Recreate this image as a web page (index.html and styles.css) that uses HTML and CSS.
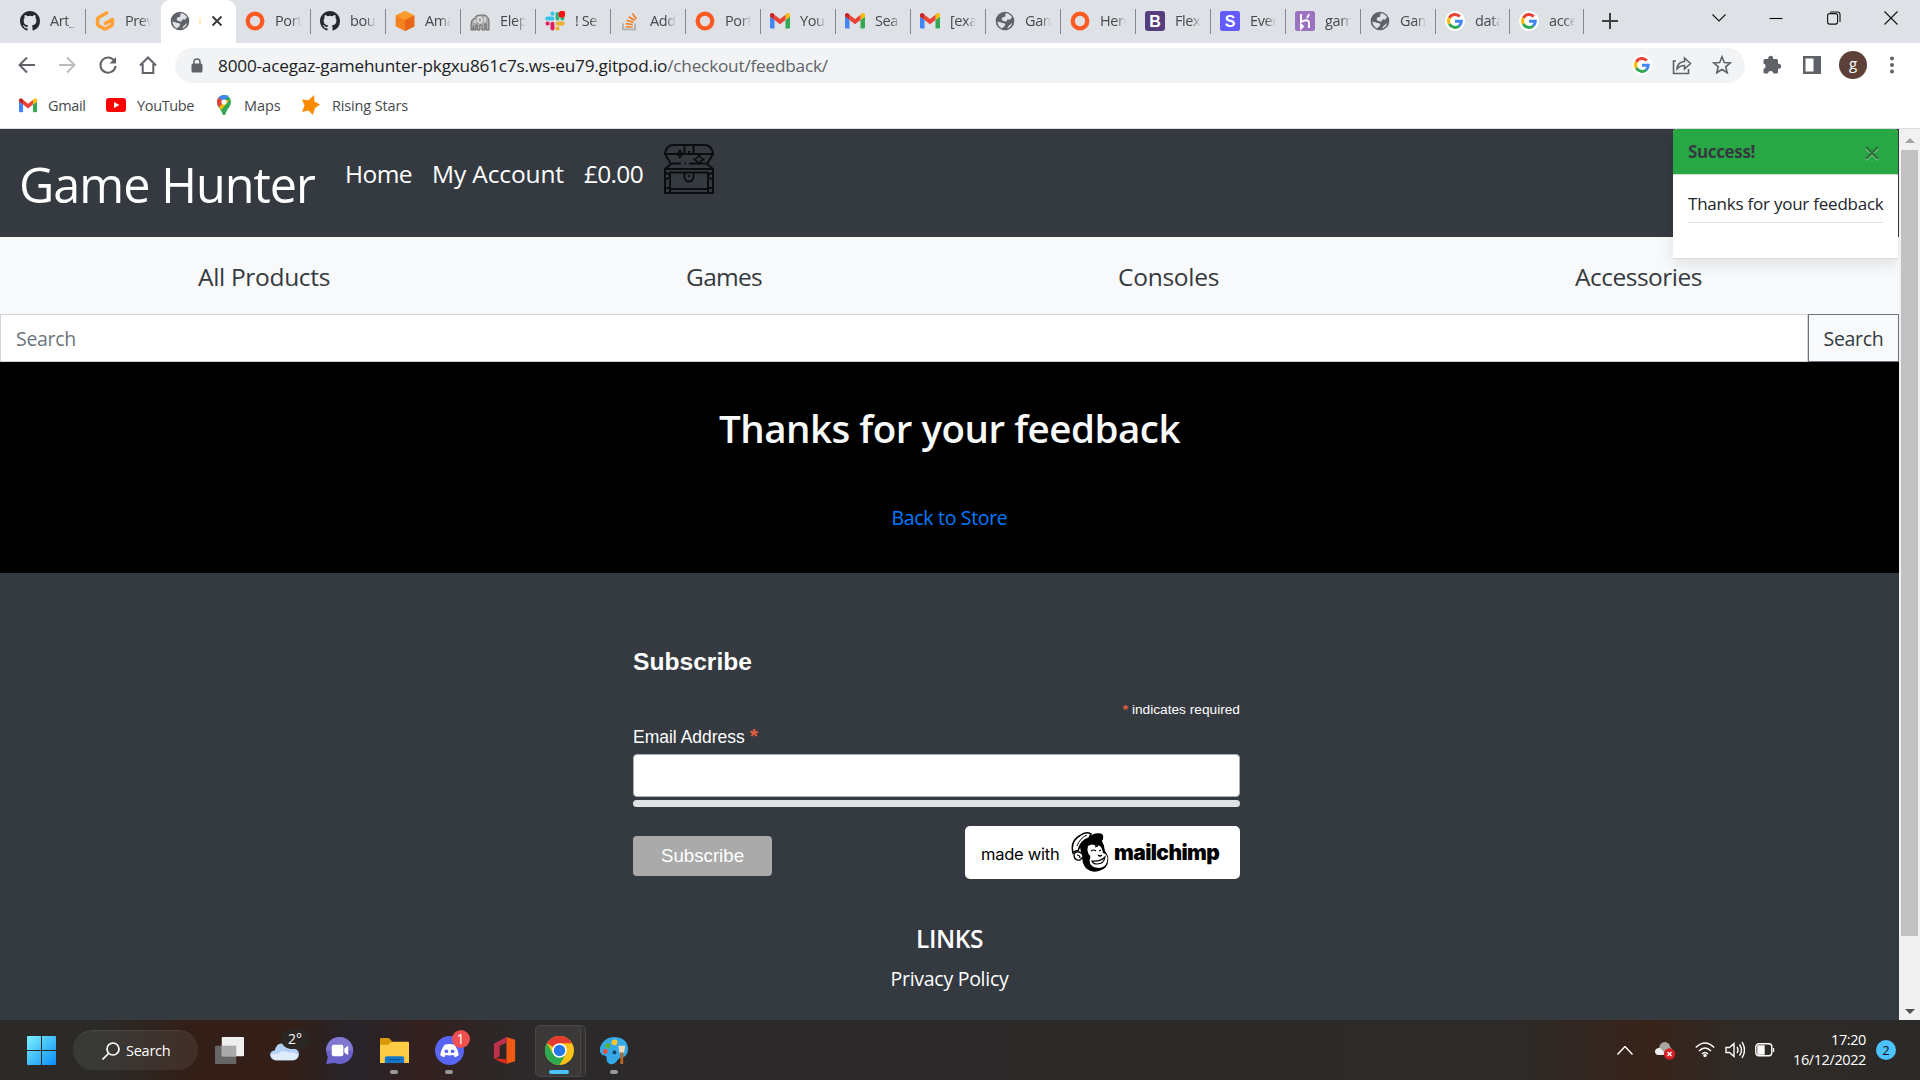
FILE: index.html
```html
<!DOCTYPE html>
<html lang="en">
<head>
<meta charset="utf-8">
<title>Game Hunter</title>
<link rel="stylesheet" href="styles.css">
</head>
<body>
<svg class="defs" aria-hidden="true">
  <symbol id="github" viewBox="0 0 16 16"><path fill="#24292f" d="M8 0C3.58 0 0 3.58 0 8c0 3.54 2.29 6.53 5.47 7.59.4.07.55-.17.55-.38 0-.19-.01-.82-.01-1.49-2.01.37-2.53-.49-2.69-.94-.09-.23-.48-.94-.82-1.13-.28-.15-.68-.52-.01-.53.63-.01 1.08.58 1.23.82.72 1.21 1.87.87 2.33.66.07-.52.28-.87.51-1.07-1.78-.2-3.64-.89-3.64-3.95 0-.87.31-1.59.82-2.15-.08-.2-.36-1.02.08-2.12 0 0 .67-.21 2.2.82a7.6 7.6 0 0 1 4 0c1.53-1.04 2.2-.82 2.2-.82.44 1.1.16 1.92.08 2.12.51.56.82 1.27.82 2.15 0 3.07-1.87 3.75-3.65 3.95.29.25.54.73.54 1.48 0 1.07-.01 1.93-.01 2.2 0 .21.15.46.55.38A8 8 0 0 0 16 8c0-4.42-3.58-8-8-8z"/></symbol>
  <symbol id="gitpod" viewBox="0 0 20 20"><path d="M11.5 2 4 6.2Q2.600 7 2.600 8.500v4.500Q2.600 14.300 4 15l5 2.700q1 .5 2 0l5-2.800q1.400-.8 1.400-2.300V8.500L10.500 12.300" fill="none" stroke="#ffa235" stroke-width="3.600" stroke-linecap="round" stroke-linejoin="round"/></symbol>
  <symbol id="globe" viewBox="0 0 20 20"><circle cx="10" cy="10" r="9.300" fill="#5f6368"/><path d="M10.500 2.200c3 .1 5.400 1.600 6.600 4l-2.200 2.600-2.300-.6-1 2.400-3-.4-2.200-1.800 1.200-2.200 2.600-.4zM2.500 10.500l4.500 1.200 3.300 1.100-.5 2.300-2.300 1.700-.5.6C4.400 16.300 2.500 13.600 2.500 10.500zM12 17.600l1.500-2.600 3.600-3c-.5 2.800-2.500 5-5.100 5.600z" fill="#dee1e6"/></symbol>
  <symbol id="ring" viewBox="0 0 20 20"><circle cx="10" cy="10" r="7.300" fill="none" stroke="#ff5a24" stroke-width="4.300"/></symbol>
  <symbol id="aws" viewBox="0 0 20 20"><path d="M10 0 19.300 4.500v11L10 20 .7 15.500v-11z" fill="#f58220"/><path d="M10 0 19.300 4.500 10 9 .7 4.500z" fill="#fb9b2e"/><path d="M10 9 19.300 4.500v11L10 20z" fill="#e8661b"/></symbol>
  <symbol id="elephant" viewBox="0 0 20 20"><path d="M1 19V13Q1 8 5 7 6 3.500 10 4h4q5 1 5 7v8h-3v-6h-1v6h-3v-5h-2v5H7v-5H6v5H3.500v-4L3 19z" fill="#aaa" stroke="#666" stroke-width="1"/><path d="M8 7q3-2 4 1t-2 4q-3-1-2-5M15 6v5M5 9v3" fill="none" stroke="#eee" stroke-width="1.200"/></symbol>
  <symbol id="slack" viewBox="0 0 20 20"><g stroke-width="4" stroke-linecap="round"><path d="M7.500 2.500v.2M2.300 7.500h5" stroke="#36c5f0"/><path d="M12.500 3v4.500M17.500 7.500h-.2" stroke="#2eb67d"/><path d="M12.700 12.500h5M12.500 17.500v-.2" stroke="#ecb22e"/><path d="M7.500 12.700v4.800M2.500 12.500h.2" stroke="#e01e5a"/></g><circle cx="17" cy="3.200" r="3.500" fill="#f11"/></symbol>
  <symbol id="stack" viewBox="0 0 20 20"><path d="M3 12.500v6h12v-6" fill="none" stroke="#aaadb0" stroke-width="1.700"/><path d="M5.500 16h7.200M5.700 12.700l7.100.8M6.700 9.300l6.700 2M8.700 5.800l5.900 3.700M12.500 2.500l3.800 5.700" stroke="#f48024" stroke-width="1.700"/></symbol>
  <symbol id="gmail" viewBox="0 0 20 16"><path d="M1 15.500h3.500V7L0 3.500v11q0 1 1 1z" fill="#4285f4"/><path d="M15.500 15.500H19q1 0 1-1v-11L15.500 7z" fill="#34a853"/><path d="M15.500 1.800V7L20 3.500V2c0-2-2.200-2.700-3.500-1.500z" fill="#fbbc04"/><path d="M4.500 7V1.700L10 6l5.500-4.200V7L10 11.300z" fill="#ea4335"/><path d="M0 2v1.500L4.500 7V1.700L3.500.5C2.200-.700 0 .2 0 2z" fill="#c5221f"/></symbol>
  <symbol id="heroku" viewBox="0 0 20 20"><rect width="20" height="20" rx="2.500" fill="#9a72c0"/><path d="M6 3v8q4-2.300 6.500-1.500 1.500.5 1.500 2.500v5M13.800 3q0 2-2 4M6 13.500v4l2-2z" fill="none" stroke="#fff" stroke-width="1.900"/></symbol>
  <symbol id="google" viewBox="0 0 20 20"><circle cx="10" cy="10" r="10" fill="#fff"/><g fill="none" stroke-width="3"><path d="M14.800 5.600A6.500 6.500 0 0 0 4.300 7" stroke="#ea4335"/><path d="M4.300 7a6.500 6.500 0 0 0 0 6" stroke="#fbbc05"/><path d="M4.300 13a6.500 6.500 0 0 0 10 1.800" stroke="#34a853"/><path d="M14.300 14.800a6.500 6.500 0 0 0 2-4.500H10" stroke="#4285f4"/></g></symbol>
</svg>

<header class="tabs">
  <div class="tab"><svg><use href="#github"/></svg><span>Art_</span></div>
  <div class="tab no-line"><svg><use href="#gitpod"/></svg><span>Prev</span></div>
  <div class="tab active"><svg><use href="#globe"/></svg><i class="hint"></i><svg class="x" viewBox="0 0 12 12"><path d="m1.500 1.500 9 9m0-9-9 9"/></svg></div>
  <div class="tab"><svg><use href="#ring"/></svg><span>Port</span></div>
  <div class="tab"><svg><use href="#github"/></svg><span>bou</span></div>
  <div class="tab"><svg><use href="#aws"/></svg><span>Ama</span></div>
  <div class="tab"><svg><use href="#elephant"/></svg><span>Elep</span></div>
  <div class="tab"><svg><use href="#slack"/></svg><span>! Se</span></div>
  <div class="tab"><svg><use href="#stack"/></svg><span>Add</span></div>
  <div class="tab"><svg><use href="#ring"/></svg><span>Port</span></div>
  <div class="tab"><svg><use href="#gmail"/></svg><span>You</span></div>
  <div class="tab"><svg><use href="#gmail"/></svg><span>Sea</span></div>
  <div class="tab"><svg><use href="#gmail"/></svg><span>[exa</span></div>
  <div class="tab"><svg><use href="#globe"/></svg><span>Gam</span></div>
  <div class="tab"><svg><use href="#ring"/></svg><span>Hero</span></div>
  <div class="tab"><svg viewBox="0 0 20 20"><rect width="20" height="20" rx="3" fill="#563d7c"/><text x="10" y="15.500" text-anchor="middle" class="glyph">B</text></svg><span>Flex</span></div>
  <div class="tab"><svg viewBox="0 0 20 20"><rect width="20" height="20" rx="2.500" fill="#635bff"/><text x="10" y="15.500" text-anchor="middle" class="glyph">S</text></svg><span>Ever</span></div>
  <div class="tab"><svg><use href="#heroku"/></svg><span>gam</span></div>
  <div class="tab"><svg><use href="#globe"/></svg><span>Gam</span></div>
  <div class="tab narrow"><svg><use href="#google"/></svg><span>data</span></div>
  <div class="tab narrow"><svg><use href="#google"/></svg><span>acce</span></div>
  <svg class="plus" viewBox="0 0 16 16"><path d="M8 0v16M0 8h16"/></svg>
  <div class="window">
    <svg viewBox="0 0 14 14"><path d="m.5 3.500 6.500 6.500 6.500-6.500"/></svg>
    <svg viewBox="0 0 14 14"><path d="M.5 7.500h13"/></svg>
    <svg viewBox="0 0 14 14"><rect x=".6" y="2.600" width="10" height="10.500" rx="2"/><path d="M3 1h7.500q2.500 0 2.500 2.500V11"/></svg>
    <svg viewBox="0 0 14 14"><path d="m.5.5 13 13m0-13-13 13"/></svg>
  </div>
</header>

<div class="toolbar">
  <div class="nav-icons">
    <svg viewBox="0 0 20 20"><path d="M18 10H3m7-7.500L2.500 10l7.500 7.500"/></svg>
    <svg class="off" viewBox="0 0 20 20"><path d="M2 10h15m-7-7.500 7.500 7.500-7.500 7.500"/></svg>
    <svg viewBox="0 0 20 20"><path d="M16.500 6A7.600 7.600 0 1 0 17.600 11"/><path d="M18 2v6.500h-6.500z" fill="#5f6368" stroke="none"/></svg>
    <svg viewBox="0 0 20 20"><path d="M2 10.500 10 2.500l8 8M4.700 9v9h10.600V9"/></svg>
  </div>
  <div class="omnibox">
    <svg class="lock" viewBox="0 0 12 15"><rect x=".5" y="5.500" width="11" height="9" rx="1.500" fill="#5f6368"/><path d="M3 6V4a3 3 0 0 1 6 0v2" fill="none" stroke="#5f6368" stroke-width="1.500"/></svg>
    <span class="url">8000-acegaz-gamehunter-pkgxu861c7s.ws-eu79.gitpod.io<span class="path">/checkout/feedback/</span></span>
    <svg class="oi" viewBox="0 0 20 20"><use href="#google"/></svg>
    <svg class="oi line" viewBox="0 0 20 20"><path d="M4 6H1.500v12.500h15V14M5 14q.5-7 7.500-7.500V3l6 5.500-6 5.500v-3.500Q8 10.500 5 14z"/></svg>
    <svg class="oi line" viewBox="0 0 20 20"><path d="m10 1.800 2.300 5.700 6.100.4-4.700 3.900 1.500 6L10 14.500l-5.200 3.300 1.500-6L1.600 7.900l6.100-.4z"/></svg>
  </div>
  <div class="ext">
    <svg viewBox="0 0 20 20"><path fill="#5f6368" d="M1.500 5.500q0-1.500 1.500-1.500h3.300a2.500 2.500 0 1 1 4.800 0H14.500q1.500 0 1.500 1.500v3.300a2.500 2.500 0 1 1 0 4.800V17q0 1.500-1.500 1.500h-3.200a2.600 2.600 0 0 0-5.200 0H3q-1.500 0-1.500-1.500v-3.300a2.600 2.600 0 0 0 0-5.100z"/></svg>
    <svg viewBox="0 0 20 20"><path fill="#5f6368" fill-rule="evenodd" d="M1 1h18v18H1zM3.500 3.500v13h8v-13z"/></svg>
    <b class="avatar">g</b>
    <svg viewBox="0 0 20 20"><g fill="#5f6368"><circle cx="10" cy="3.500" r="2"/><circle cx="10" cy="10" r="2"/><circle cx="10" cy="16.500" r="2"/></g></svg>
  </div>
</div>

<div class="bookmarks">
  <a class="bm1"><svg viewBox="0 0 20 16"><use href="#gmail"/></svg><span>Gmail</span></a>
  <a class="bm2"><svg viewBox="0 0 20 16"><rect y="1" width="20" height="14" rx="3" fill="#f00"/><path d="m8 5 5.500 3L8 11z" fill="#fff"/></svg><span>YouTube</span></a>
  <a class="bm3"><svg viewBox="0 0 14 20"><path d="M7 0a7 7 0 0 1 7 7c0 4-4 7-5.500 12-.4 1.300-2.600 1.300-3 0C4.500 15 0 11.500 0 7a7 7 0 0 1 7-7z" fill="#34a853"/><path d="M0 7c0 2 .8 3.500 2 5.200L11.800.700 7 0a7 7 0 0 0-7 7z" fill="#4285f4"/><path d="M0 7q.2 2.600 2 5.200L7 7 1.700 2.500Q0 4.500 0 7z" fill="#ea4335"/><path d="m2 12.200 2 2.800 8-9.500L9 5z" fill="#fbbc04"/><circle cx="7" cy="7" r="2.600" fill="#fff"/></svg><span>Maps</span></a>
  <a class="bm4"><svg viewBox="0 0 18 20"><path d="m12 0 .5 6.500 5.500 3-5.200 3.700L11 20l-4.500-4.500L0 17l2.500-6.500L0 4.500l6.500.8z" fill="#fb8c00"/></svg><span>Rising Stars</span></a>
</div>

<div class="viewport">
  <main class="page">
    <nav class="navbar">
      <a class="brand">Game Hunter</a>
      <a class="nl home">Home</a>
      <a class="nl account">My Account</a>
      <a class="nl total">£0.00</a>
      <svg class="chest" viewBox="0 0 50 50"><path d="M1 10Q2 1 10 1h30q8 0 9 9zM1 10l6 10-6 5h48l-6-5 6-10M8 19.500h9M20.500 19.500h1.500M25 19.500h18M20.500 1v9M29.500 1v9M25 7v3M1 25h48v24H1zM6 28.500h38V45H6zM1 36l5-3M49 36l-5-3M1 44h5v5M49 44h-5v5M1 28l5 3M49 28l-5 3M20.500 28.500V33a4.500 4.500 0 0 0 9 0v-4.500M25 31v2"/><path class="spark" d="M16 5.500Q16.500 9.500 20.500 10 16.500 10.500 16 14.500 15.500 10.500 11.500 10 15.500 9.500 16 5.500zM35 10Q35.600 14.500 40.500 15.500 35.600 16.500 35 21 34.400 16.500 29.500 15.500 34.400 14.500 35 10z"/></svg>
      <aside class="toast">
        <div class="toast-head"><strong>Success!</strong><svg viewBox="0 0 16 16"><path class="halo" d="m2 3 12 12M14 3 2 15"/><path d="m2 2 12 12M14 2 2 14"/></svg></div>
        <div class="toast-body"><p>Thanks for your feedback</p></div>
      </aside>
    </nav>
    <nav class="cats"><a class="all">All Products</a><a class="games">Games</a><a class="consoles">Consoles</a><a class="accessories">Accessories</a></nav>
    <form class="search"><div class="field">Search</div><div class="go">Search</div></form>
    <section class="thanks">
      <h1>Thanks for your feedback</h1>
      <a>Back to Store</a>
    </section>
    <footer>
      <div class="signup">
        <h2>Subscribe</h2>
        <p class="req"><em>*</em> indicates required</p>
        <label>Email Address <em>*</em></label>
        <div class="email"></div>
        <div class="bar"></div>
        <div class="row">
          <div class="btn">Subscribe</div>
          <div class="chimp">
            <span class="made">made with</span>
            <svg viewBox="0 0 38 41"><path d="M9 15Q12 6 20 4l10 3q3 5 4 12l3 5q2 12-9 15-12 3-16-8z" fill="#000"/><path d="M2 21Q-1 9 9 3.500 15-1 20 2l-2 4Q10 8 7 19q-3-1-5 2z" fill="#fff" stroke="#000" stroke-width="1.500"/><path d="M6 14Q9 6 16 3" fill="none" stroke="#000"/><path d="M18 5Q23 0 30 1.500q3 1 2 6-1 2-4 2-5-2-11 1z" fill="#000"/><path d="M17 14q4-3 8 0 4-2 6 3l1 4q4 1 4.500 5 0 9-8 10-10 0-10-8 2-4-1-6-2-4-.5-8z" fill="#fff"/><path d="M8 20q-5-1-5 4 1 5 6 4l3-3q0-4-4-5z" fill="#fff" stroke="#000" stroke-width="1.300"/><path d="M6 23q3 0 3 3M20 19q3-2 5 0M28 19l2-1M27 23q2 2 4 0M21 29q8 1 13-4-1 7-8 7-4 0-5-3zM24 15l3-1" fill="none" stroke="#000" stroke-width="1.200"/></svg>
            <b>mailchimp</b>
          </div>
        </div>
      </div>
      <h3>LINKS</h3>
      <a class="privacy">Privacy Policy</a>
    </footer>
  </main>
  <div class="scroll"><i class="up"></i><i class="thumb"></i><i class="down"></i></div>
</div>

<div class="taskbar">
  <svg class="start" viewBox="0 0 29 29"><defs><linearGradient id="w" x2="1" y2="1"><stop stop-color="#7df1ff"/><stop offset="1" stop-color="#0a8cf5"/></linearGradient></defs><path fill="url(#w)" d="M1 0h13v14H0V1q0-1 1-1zM15 0h13q1 0 1 1v13H15zM0 15h14v14H1q-1 0-1-1zM15 15h14v13q0 1-1 1H15z"/></svg>
  <div class="tsearch"><svg viewBox="0 0 18 18"><circle cx="11" cy="7" r="6"/><path d="m6.500 11.500-6 6"/></svg><span>Search</span></div>
  <div class="app"><svg viewBox="0 0 30 30"><rect y="10" width="22" height="19" rx="1" fill="#666"/><rect x="7" y="1" width="23" height="20" rx="1" fill="#efefef"/><path d="M7 10h15v11H7z" fill="#aaa"/></svg></div>
  <div class="app"><svg viewBox="0 0 30 30"><path d="M5 25q-5-1-5-6 1-4 5-4Q7 6 14 8q5 1 6 5 10-1 10 6 0 5-5 6z" fill="#b3d0f6"/><path d="M1 20q3-3 7-1 4-6 11-2 7-1 10 3-1 5-5 5H6q-4 0-5-5z" fill="#dfeafb"/></svg><b class="temp">2°</b></div>
  <div class="app"><svg viewBox="0 0 30 30"><path d="M15 1a14 14 0 1 1-5 27L1 29l2-7A14 14 0 0 1 15 1z" fill="#6a62c8"/><path d="M15 1A14 14 0 0 1 29 15H1A14 14 0 0 1 15 1z" fill="#8177cf"/><rect x="7" y="9" width="12" height="12" rx="2" fill="#fff"/><path d="m20 13 4-3v10l-4-3z" fill="#fff"/></svg></div>
  <div class="app run"><svg viewBox="0 0 30 30"><path d="M0 3q0-1 1-1h8l3 3v5H0z" fill="#d99a09"/><path d="M0 9h9l3-3h17q1 0 1 1v21H0z" fill="#fdcb45"/><path d="M5 28v-5q0-2 2-2h16q2 0 2 2v5z" fill="#1478c8"/><path d="M9 24.500h12" stroke="#0a4a85"/></svg></div>
  <div class="app run"><svg viewBox="0 0 30 30"><circle cx="15" cy="15" r="15" fill="#5865f2"/><path d="M10 9q5-1.500 10 0 4 5 4.500 11-2 1.500-4 2l-1.500-2.300q-4 1-8 0L9.500 22q-2-.5-4-2Q6 14 10 9z" fill="#fff"/><circle cx="11.800" cy="15.800" r="1.900" fill="#5865f2"/><circle cx="18.200" cy="15.800" r="1.900" fill="#5865f2"/></svg><b class="count">1</b></div>
  <div class="app"><svg viewBox="0 0 30 30"><path d="m17 1 9 3v22l-9 3z" fill="#f05a14"/><path d="M17 1v6l-7 3v11l-6 3V8z" fill="#c0304a"/><path d="m5 23 12 1v5l-8-3z" fill="#d8281c"/></svg></div>
  <div class="app run current"><svg viewBox="0 0 30 30"><circle cx="15" cy="15" r="15" fill="#fbc116"/><path d="M15 15 2 7.500A15 15 0 0 1 28 7.500H15z" fill="#e33b2e"/><path d="M2 7.500A15 15 0 0 0 15 30l6.500-11.200L15 15 8.500 18.700z" fill="#2da94f"/><circle cx="15" cy="15" r="7.500" fill="#fff"/><circle cx="15" cy="15" r="5.900" fill="#2478e8"/></svg></div>
  <div class="app run"><svg viewBox="0 0 30 30"><path d="M14 1q14 0 15 12 0 7-5 9-4 0-6 3-3 5-8 4-4-2-3-6 0-3-4-3-4-2-3-8Q3 2 14 1z" fill="#35a9e8"/><circle cx="15" cy="6.500" r="3" fill="#ffc72c"/><circle cx="8" cy="10" r="2.700" fill="#5ab23a"/><circle cx="5.500" cy="16" r="2.500" fill="#f04e2e"/><circle cx="15" cy="17" r="2" fill="#1a3e68"/><path d="M22.500 16v13" stroke="#b8641e" stroke-width="3"/><path d="M19 10h7l-1 7h-5z" fill="#f2dcb8"/></svg></div>
  <div class="tray">
    <svg class="chev" viewBox="0 0 16 9"><path d="m.5 8.500 7.500-8 7.500 8"/></svg>
    <svg class="cloud" viewBox="0 0 20 18"><path d="M3 13q-3-1-3-4 1-3 4-3Q5 0 10 0q5 1 5 5l2 2v6z" fill="#a9a6a2"/><path d="M3 13q-3-1-3-4 1-3 5-3l7 7z" fill="#eee"/><circle cx="14.500" cy="12" r="5.700" fill="#d61f28"/><path d="m12.500 10 4 4m0-4-4 4" stroke="#fff" stroke-width="1.400"/></svg>
    <svg class="wifi" viewBox="0 0 20 16"><path d="M.8 5.500q9.200-9 18.400 0M4 9q6-6 12 0M7 12q3-3 6 0"/><circle cx="10" cy="13.500" r="1.700" fill="#fff" stroke="none"/></svg>
    <svg class="sound" viewBox="0 0 20 18"><path d="M1 6.500v5h3.500L9 15.500v-13L4.500 6.500zM12 6q2 3 0 6M14.500 3.500q4 5.500 0 11M17 1q5 8 0 16"/></svg>
    <svg class="batt" viewBox="0 0 20 14"><rect x=".8" y=".8" width="16" height="12" rx="3"/><path d="M3 3h6v8H3z" fill="#fff"/><path d="M18.500 5v4"/></svg>
    <div class="clock"><span>17:20</span><span>16/12/2022</span></div>
    <b class="notes">2</b>
  </div>
</div>
</body>
</html>
```
FILE: styles.css
```css
* { box-sizing: border-box; }
body { margin: 0; width: 1920px; height: 1080px; overflow: hidden; display: flex; flex-direction: column; background: #fff; font-family: "Open Sans", "Noto Sans", sans-serif; color: #343a40; }
svg { display: block; flex: none; }
p, h1, h2, h3 { margin: 0; font-weight: 400; }
em { font-style: normal; font-weight: 700; color: #e85c41; }
.defs { position: absolute; width: 0; height: 0; }
.glyph { font: 700 16px "Liberation Sans", sans-serif; fill: #fff; }

.tabs { height: 43px; flex: none; background: #dee1e6; display: flex; align-items: flex-start; padding-left: 11px; }
.tab { width: 75px; height: 43px; flex: none; display: flex; align-items: center; gap: 10px; padding: 0 0 1px 9px; background: linear-gradient(#84878c, #84878c) right 0 top 9px / 1.500px 25px no-repeat; }
.tab.narrow { width: 74px; }
.tab svg { width: 20px; height: 20px; }
.tab span { width: 26px; overflow: hidden; white-space: nowrap; font-size: 14.500px; line-height: 24px; letter-spacing: -0.400px; color: #45494d; -webkit-mask-image: linear-gradient(90deg, #000 60%, transparent); mask-image: linear-gradient(90deg, #000 60%, transparent); }
.tab.no-line { background: none; }
.tab.active { background: #fff; border-radius: 9px 9px 0 0; }
.tab.active .x { width: 12px; height: 12px; stroke: #33363a; stroke-width: 1.800; margin-left: 1px; }
.hint { width: 2px; height: 7px; background: #ffefc0; margin: 0 -1px; }
.plus { width: 16px; height: 16px; margin: 13px 0 0 18px; stroke: #3c4043; stroke-width: 2; }
.window { display: flex; gap: 43.500px; margin: 11px 22px 0 auto; }
.window svg { width: 14px; height: 14px; fill: none; stroke: #111; stroke-width: 1.100; }

.toolbar { height: 44px; flex: none; display: flex; align-items: center; padding-left: 17px; }
.nav-icons { display: flex; gap: 20.300px; width: 158px; flex: none; }
.nav-icons svg { width: 20px; height: 20px; fill: none; stroke: #5f6368; stroke-width: 2; }
.nav-icons .off { stroke: #babcbe; }
.omnibox { width: 1570px; flex: none; height: 35px; border-radius: 18px; background: #f1f3f4; display: flex; align-items: center; padding: 0 13px 0 16px; }
.lock { width: 12px; height: 15px; }
.url { margin: 0 auto 0 15px; font-size: 17.200px; letter-spacing: -0.200px; color: #202124; white-space: nowrap; }
.path { color: #5f6368; }
.oi { width: 20px; height: 20px; margin-left: 20px; }
.line { fill: none; stroke: #5f6368; stroke-width: 1.600; }
.ext { display: flex; align-items: center; margin-left: 17px; }
.ext svg { width: 20px; height: 20px; margin-right: 20px; }
.ext svg:last-child { margin-right: 0; }
.avatar { width: 28px; height: 28px; border-radius: 50%; background: #5d4037; color: #fff; font: 15px/25px "Open Sans", sans-serif; text-align: center; margin: 0 15px 0 -3px; }

.bookmarks { height: 42px; flex: none; border-bottom: 1px solid #dadce0; display: flex; padding: 5px 0 0 19px; color: #45494d; }
.bookmarks a { display: flex; align-items: center; height: 26px; font-size: 14.500px; white-space: nowrap; }
.bookmarks .bm1 { width: 87px; gap: 11px; letter-spacing: -0.370px; }
.bookmarks .bm2 { width: 111px; gap: 11px; letter-spacing: -0.350px; }
.bookmarks .bm3 { width: 85px; gap: 13px; letter-spacing: -0.100px; }
.bookmarks .bm4 { gap: 12px; letter-spacing: -0.140px; }
.bm1 svg { width: 18px; height: 15px; }
.bm2 svg { width: 20px; height: 16px; }
.bm3 svg { width: 14px; height: 20px; }
.bm4 svg { width: 18px; height: 20px; }

.viewport { height: 891px; flex: none; display: flex; }
.page { width: 1899px; height: 891px; overflow: hidden; display: flex; flex-direction: column; position: relative; }
.navbar { height: 108px; flex: none; background: #343a40; display: flex; color: #fff; white-space: nowrap; padding-left: 19px; }
.brand { width: 326px; font-size: 48.500px; letter-spacing: -0.960px; line-height: 70px; padding-top: 20px; }
.nl { font-size: 24.500px; line-height: 36px; padding-top: 27px; }
.home { width: 87px; letter-spacing: -0.560px; }
.account { width: 152px; letter-spacing: -0.120px; }
.total { width: 80px; letter-spacing: -0.700px; }
.chest { width: 50px; height: 50px; margin-top: 15px; fill: none; stroke: #0b0d0e; stroke-width: 2; }
.chest .spark { stroke-width: 1.600; }
.cats { height: 77px; flex: none; background: #f8f9fa; display: flex; justify-content: space-between; align-items: center; padding: 2px 197px 0 198px; font-size: 24.500px; }
.all { letter-spacing: -0.320px; }
.games { letter-spacing: -0.710px; }
.consoles { letter-spacing: -0.280px; }
.accessories { letter-spacing: -0.500px; }
.search { height: 48px; flex: none; display: flex; font-size: 19.500px; line-height: 48px; letter-spacing: -0.290px; }
.field { flex: 1; border: 1px solid #ced4da; padding-left: 15px; color: #6c757d; }
.go { width: 91px; border: 1px solid #6c757d; background: #f8f9fa; text-align: center; }
.thanks { height: 211px; flex: none; background: #000; display: flex; flex-direction: column; align-items: center; padding-top: 36px; gap: 45px; }
.thanks h1 { font-size: 38.500px; font-weight: 600; line-height: 60px; letter-spacing: -0.490px; color: #f8f9fa; }
.thanks a { font-size: 19.500px; line-height: 30px; letter-spacing: -0.320px; color: #007bff; }

.toast { position: absolute; right: 1px; top: 0; width: 225px; height: 130px; border-radius: 4px 4px 0 0; background: #fff; border-bottom: 1px solid #dcdde0; box-shadow: 0 5px 15px rgba(0,0,0,.1); color: #212529; font-size: 17px; }
.toast-head { height: 46px; border-radius: 4px 4px 0 0; background: #28a745; border-bottom: 1px solid #d5d9d6; display: flex; align-items: center; justify-content: space-between; padding: 0 18px 0 15px; color: #343a40; letter-spacing: -0.350px; }
.toast-head svg { width: 16px; height: 16px; margin-top: 3px; stroke: #2c6e3c; stroke-width: 2.300; }
.toast-head .halo { stroke: #a5d6b0; stroke-width: 2; }
.toast-body { padding: 14px 15px 0; }
.toast-body p { height: 34px; line-height: 29px; letter-spacing: -0.230px; border-bottom: 1px solid #dee2e6; }

footer { flex: 1; background: #343a40; color: #fff; display: flex; flex-direction: column; align-items: center; }
.signup { width: 607px; margin: 74px 26px 0 0; font-family: "Liberation Sans", Arial, sans-serif; }
h2 { font-size: 24.600px; font-weight: 700; line-height: 30px; }
.req { margin-top: 23px; font-size: 13.700px; line-height: 20px; text-align: right; }
label { display: block; margin-top: 5px; height: 24px; font-size: 17.500px; line-height: 24px; }
label em { font-size: 21px; line-height: 20px; }
.email { height: 43px; margin-top: 5px; background: #fff; border: 1px solid #abb0b2; border-radius: 4px; }
.bar { height: 7px; margin-top: 3px; border-radius: 4px; background: #e0e1e3; }
.row { display: flex; justify-content: space-between; align-items: flex-start; margin-top: 19px; }
.btn { width: 139px; height: 40px; margin-top: 10px; background: #aaa; border-radius: 4px; text-align: center; font-size: 18.700px; line-height: 39px; }
.chimp { width: 275px; height: 53px; border-radius: 5px; background: #fff; color: #000; display: flex; align-items: center; padding-left: 16px; font: 16.500px "Inter", sans-serif; white-space: nowrap; }
.made { width: 90px; padding-top: 3px; letter-spacing: -0.250px; }
.chimp svg { width: 38px; height: 41px; }
.chimp b { margin-left: 5px; font-size: 21px; font-weight: 900; letter-spacing: -0.600px; }
h3 { margin-top: 42px; font-size: 24.500px; line-height: 36px; font-weight: 600; letter-spacing: -0.420px; }
.privacy { margin-top: 7px; font-size: 19.500px; line-height: 30px; letter-spacing: -0.270px; }

.scroll { width: 21px; background: #f1f1f1; display: flex; flex-direction: column; align-items: center; }
.scroll i { width: 0; border: 5px solid transparent; }
.scroll .up { margin-top: 4px; border-bottom-color: #a3a3a3; }
.scroll .thumb { width: 17px; height: 786px; margin-top: 7px; border: 0; background: #c1c1c1; }
.scroll .down { margin: auto 0 1px; border-top-color: #505050; }

.taskbar { height: 60px; flex: none; display: flex; align-items: center; padding-left: 27px; color: #fff; background: linear-gradient(90deg, #2b2a28 0, #2b2a28 100px, #331f17 190px, #331f17 290px, #27242a 350px, #34201f 420px, #2b2929 520px, #2c2b29 1500px, #38231a 1650px, #2f2a26 1740px, #2b2a28); }
.start { width: 29px; height: 29px; }
.tsearch { width: 125px; height: 40px; border-radius: 20px; margin: 0 3.500px 0 17px; background: rgba(255,255,255,.07); border-top: 1px solid rgba(255,255,255,.08); display: flex; align-items: center; padding-left: 29px; gap: 6px; font-size: 14.500px; letter-spacing: -0.240px; }
.tsearch svg { width: 18px; height: 18px; fill: none; stroke: #fff; stroke-width: 1.700; }
.app { width: 55px; height: 60px; flex: none; position: relative; display: flex; align-items: center; justify-content: center; }
.app svg { width: 29px; height: 29px; position: relative; }
.run::after { content: ""; position: absolute; bottom: 6px; width: 8px; height: 4px; border-radius: 2px; background: #999; }
.current::before { content: ""; position: absolute; left: 3px; top: 5px; width: 44px; height: 50px; border-radius: 5px; background: #3a3938; border: 1px solid #484745; box-shadow: 5px 0 0 -1px #343332, 5px 0 0 #484745; }
.current::after { width: 20px; background: #4cc2ff; }
.temp, .count { position: absolute; font: 14px/20px "Open Sans", sans-serif; text-align: center; border-radius: 10px; }
.temp { left: 24px; top: 9px; width: 29px; background: #2a2725; }
.count { left: 30px; top: 10px; width: 18px; height: 18px; line-height: 18px; background: #f0504f; }
.tray { margin-left: auto; display: flex; align-items: center; padding-right: 24px; }
.tray svg { fill: none; stroke: #fff; stroke-width: 1.400; }
.tray .chev { width: 16px; height: 9px; margin-right: 22px; }
.tray .cloud { width: 20px; height: 18px; margin: 2px 20px 0 0; stroke: none; }
.tray .wifi { width: 20px; height: 16px; margin-right: 10px; }
.tray .sound { width: 20px; height: 18px; margin-right: 10px; }
.tray .batt { width: 20px; height: 14px; margin-right: 18px; }
.clock { width: 73px; display: flex; flex-direction: column; align-items: flex-end; font-size: 14.500px; line-height: 20px; letter-spacing: -0.400px; margin-right: 10px; white-space: nowrap; padding-bottom: 1px; }
.notes { width: 20px; height: 20px; border-radius: 50%; background: #4cc2ff; color: #111; font: 13px/20px "Open Sans", sans-serif; text-align: center; }
```
